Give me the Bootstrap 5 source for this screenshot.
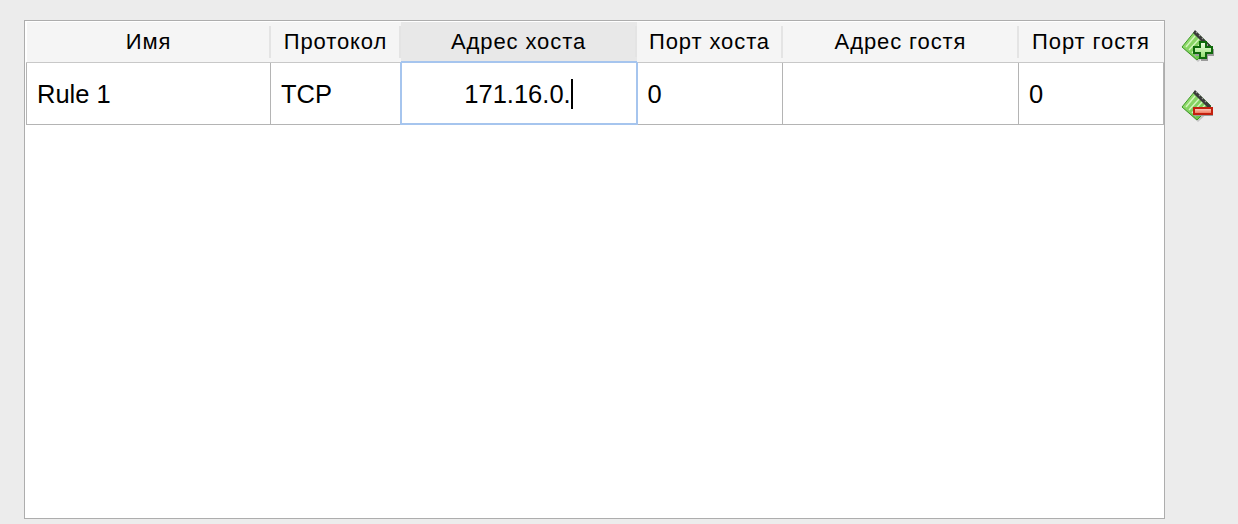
<!DOCTYPE html>
<html lang="ru">
<head>
<meta charset="utf-8">
<title>Правила</title>
<link href="https://cdn.jsdelivr.net/npm/bootstrap@5.3.0/dist/css/bootstrap.min.css" rel="stylesheet">
<style>
html,body{height:524px;overflow:hidden}
body{background:#ececec;font-family:"Liberation Sans",Arial,sans-serif;color:#000}
.shell{padding:20px 0 4px 24px;height:524px;gap:15px}
.frame{width:1141px;height:499px;background:#fff;border:1px solid #adadad;padding:1px}
.rules{table-layout:fixed;width:1137px;border-collapse:collapse;margin:0}
.rules th{height:40px;background:#f5f5f5;font-weight:400;font-size:22px;letter-spacing:.9px;text-align:center;padding:0;position:relative;border-bottom:1px solid #c8c8c8}
.rules th:not(:last-child)::after{content:"";position:absolute;right:0;top:4px;bottom:4px;width:2px;background:#e4e4e4}
.rules th.act{background:#e8e8e8}
.rules td{height:62px;font-size:25.5px;padding:2px 0 0 10px;border:1px solid #b4b4b4;border-top:0;vertical-align:middle;white-space:nowrap}
.rules td.edit{position:relative;text-align:center;padding:2px 0 0;border:2px solid #a6c5ee;border-radius:2px}
.caret-bar{display:inline-block;width:2px;height:30px;background:#000;vertical-align:-6px}
.tools{gap:24px;padding-top:8px;width:40px}
.tool{width:36px;height:36px;display:block}
</style>
</head>
<body>
<div class="shell d-flex align-items-start">
  <div class="frame">
    <table class="rules">
      <colgroup><col style="width:244px"><col style="width:130px"><col style="width:236px"><col style="width:146px"><col style="width:236px"><col style="width:145px"></colgroup>
      <thead><tr><th>Имя</th><th>Протокол</th><th class="act">Адрес хоста</th><th>Порт хоста</th><th>Адрес гостя</th><th>Порт гостя</th></tr></thead>
      <tbody><tr><td>Rule 1</td><td>TCP</td><td class="edit">171.16.0.<span class="caret-bar"></span></td><td>0</td><td></td><td>0</td></tr></tbody>
    </table>
  </div>
  <div class="tools d-flex flex-column">
    <svg class="tool" viewBox="0 0 36 36">
      <defs>
        <linearGradient id="gBody" x1="0" y1="0" x2="1" y2="1"><stop offset="0" stop-color="#a6e67f"/><stop offset="1" stop-color="#57b83a"/></linearGradient>
        <linearGradient id="gPlus" x1="0" y1="0" x2="0" y2="1"><stop offset="0" stop-color="#f2ffe8"/><stop offset="1" stop-color="#8fe06a"/></linearGradient>
        <linearGradient id="gMinus" x1="0" y1="0" x2="0" y2="1"><stop offset="0" stop-color="#ffd9cc"/><stop offset="1" stop-color="#ee6a4c"/></linearGradient>
      </defs>
      <path d="M4 21 18 34l14-13z" fill="#c4c4c4"/>
      <path d="M2 19 15 3l16 15-14 14z" fill="url(#gBody)" stroke="#3c9a25"/>
      <path d="M15 2l16 16-2 3L13 5z" fill="#3a3a3a"/>
      <path d="M16 4l1 1M19 7l1 1M22 10l1 1M25 13l1 1" stroke="#999" stroke-width="1.2"/>
      <path d="M6 19 15 8M9 22 19 11M12 25 22 14M15 28 25 17" stroke="#d3f5bd" stroke-width="1.4"/>
      <path d="M20 15h7v5h6v7h-6v5h-7v-5h-6v-7h6z" fill="#9b9b9b" transform="translate(1 1)"/>
      <path d="M20 15h6v5h6v6h-6v5h-6v-5h-6v-6h6z" fill="url(#gPlus)" stroke="#0f6a0c" stroke-width="2" transform="translate(0 -1)"/>
    </svg>
    <svg class="tool" viewBox="0 0 36 36">
      <path d="M4 21 18 34l14-13z" fill="#c4c4c4"/>
      <path d="M2 19 15 3l16 15-14 14z" fill="url(#gBody)" stroke="#3c9a25"/>
      <path d="M15 2l16 16-2 3L13 5z" fill="#3a3a3a"/>
      <path d="M16 4l1 1M19 7l1 1M22 10l1 1M25 13l1 1" stroke="#999" stroke-width="1.2"/>
      <path d="M6 19 15 8M9 22 19 11M12 25 22 14M15 28 25 17" stroke="#d3f5bd" stroke-width="1.4"/>
      <rect x="14" y="21" width="19" height="7" fill="#9b9b9b"/>
      <rect x="14" y="20" width="18" height="6" fill="url(#gMinus)" stroke="#c3200e" stroke-width="2"/>
    </svg>
  </div>
</div>
<script src="https://cdn.jsdelivr.net/npm/bootstrap@5.3.0/dist/js/bootstrap.bundle.min.js"></script>
</body>
</html>
